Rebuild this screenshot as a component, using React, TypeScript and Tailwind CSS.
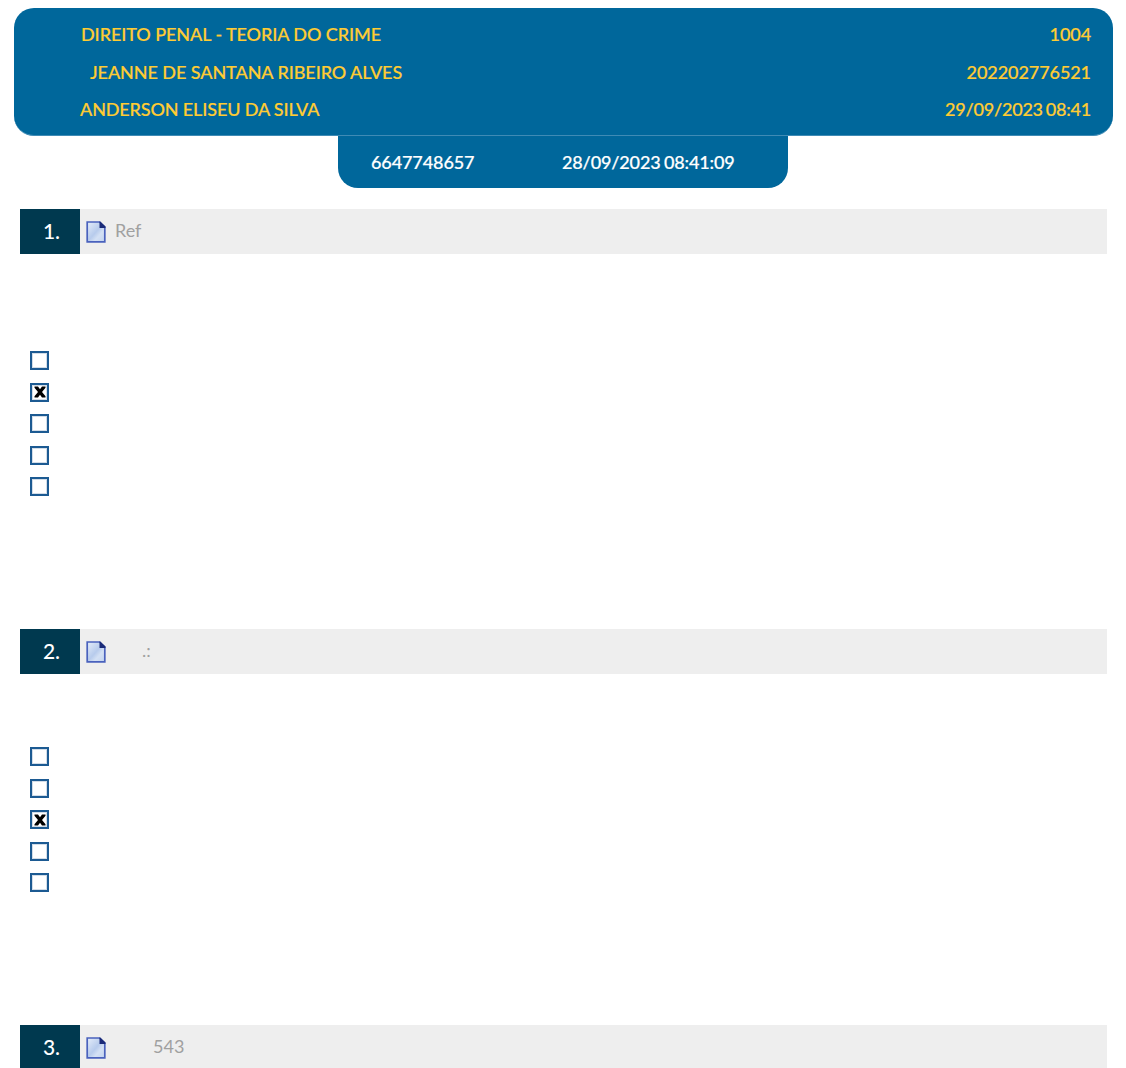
import { ReactNode } from "react";

function DocIcon() {
  return (
    <svg width="20" height="22" viewBox="0 0 20 22" className="shrink-0">
      <defs>
        <linearGradient id="docFill" x1="0" y1="0" x2="1" y2="1">
          <stop offset="0" stopColor="#e6eefa" />
          <stop offset="0.5" stopColor="#b7cbec" />
          <stop offset="0.68" stopColor="#d3e0f4" />
          <stop offset="1" stopColor="#c2d3ef" />
        </linearGradient>
      </defs>
      <path d="M1.2 1h12.3l5.3 5v14.8H1.2z" fill="url(#docFill)" stroke="#4a62bd" strokeWidth="1.7" />
      <path d="M13.5 0.5h0.8l5.2 5v1.5h-6z" fill="#1a2a78" />
    </svg>
  );
}

function CheckBox({ checked = false }: { checked?: boolean }) {
  return (
    <div className="w-[19px] h-[19px] border-2 border-[#1c5a92] bg-white">
      <div className="w-full h-full border border-[#d3dde8] flex items-center justify-center">
        {checked && (
          <svg width="12" height="12" viewBox="0 0 12 11" preserveAspectRatio="none">
            <path d="M0.5 0.5h3.5l2 2.5 2-2.5h3.5v1l-3.5 4 3.5 4v1h-3.5l-2-2.5-2 2.5h-3.5v-1l3.5-4-3.5-4z" fill="#000" />
          </svg>
        )}
      </div>
    </div>
  );
}

function QuestionBar({ num, children }: { num: string; children?: ReactNode }) {
  return (
    <div className="flex h-[45px] ml-5 w-[1087px] bg-[#eeeeee]">
      <div className="w-[60px] bg-[#00394f] text-white text-[21px] font-medium flex items-center justify-center pl-[3px] pb-[2px]">
        {num}
      </div>
      <div className="pl-[6px] flex items-center">
        <DocIcon />
      </div>
      {children}
    </div>
  );
}

function Options({ marked }: { marked: number }) {
  return (
    <div className="ml-[30px] flex flex-col gap-[12.5px]">
      {[0, 1, 2, 3, 4].map((i) => (
        <CheckBox key={i} checked={i === marked} />
      ))}
    </div>
  );
}

function HeaderLine({ left, right, pad }: { left: ReactNode; right: ReactNode; pad: string }) {
  return (
    <div className="flex justify-between items-center h-[37.5px] pr-[22px]">
      <span className={pad}>{left}</span>
      <span>{right}</span>
    </div>
  );
}

export default function App() {
  return (
    <div className="w-[1126px] h-[1068px] overflow-hidden bg-white font-['Lato',sans-serif] pt-2">
      <div className="ml-[14px] w-[1099px] h-[128px] rounded-[20px] bg-[#00679b] text-[#ffcc33] text-[18px] font-medium tracking-[-0.07px] [-webkit-text-stroke:0.2px_#ffcc33] pt-[8px] border-b border-[#3f8bb5]">
        <HeaderLine left="DIREITO PENAL - TEORIA DO CRIME" right="1004" pad="pl-[67px]" />
        <HeaderLine left="JEANNE DE SANTANA RIBEIRO ALVES" right="202202776521" pad="pl-[76px]" />
        <HeaderLine
          left={<span className="tracking-[-0.13px]">ANDERSON ELISEU DA SILVA</span>}
          right={<span className="tracking-[-0.2px] [word-spacing:-1.5px]">29/09/2023 08:41</span>}
          pad="pl-[66px]"
        />
      </div>
      <div className="ml-[338px] w-[450px] h-[52px] rounded-b-[20px] bg-[#00679b] text-white text-[18px] font-medium tracking-[-0.1px] [-webkit-text-stroke:0.2px_#ffffff] flex items-center">
        <span className="ml-[33px] w-[191px]">6647748657</span>
        <span className="tracking-[-0.14px] [word-spacing:-1px]">28/09/2023 08:41:09</span>
      </div>

      <div className="mt-[21px]">
        <QuestionBar num="1.">
          <span className="ml-[9px] mb-[2px] self-center text-[#a0a0a0] text-[18px]">Ref</span>
        </QuestionBar>
      </div>
      <div className="mt-[97px]">
        <Options marked={1} />
      </div>

      <div className="mt-[133px]">
        <QuestionBar num="2.">
          <span className="ml-[36px] mb-[2px] self-center text-[#a0a0a0] text-[18px]">.:</span>
        </QuestionBar>
      </div>
      <div className="mt-[73px]">
        <Options marked={2} />
      </div>

      <div className="mt-[133px]">
        <QuestionBar num="3.">
          <span className="ml-[47px] mb-[2px] self-center text-[#a0a0a0] text-[18px]">543</span>
        </QuestionBar>
      </div>
    </div>
  );
}
